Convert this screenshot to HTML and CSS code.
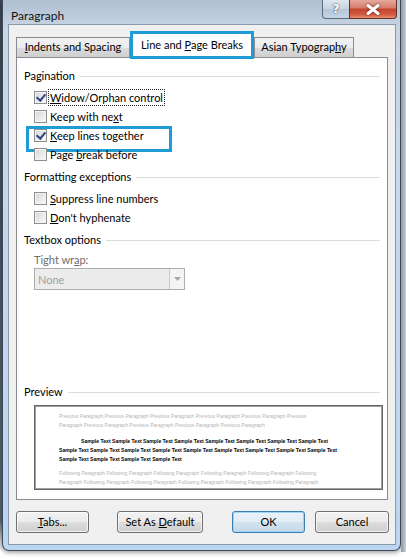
FILE: index.html
```html
<!DOCTYPE html>
<html>
<head>
<meta charset="utf-8">
<link rel="stylesheet" href="styles.css">
</head>
<body>
<div class="screen">
  <div class="window">
    <div class="titlebar">
      <span class="title">Paragraph</span>
      <div class="caption-btns">
        <div class="cbtn help">?</div>
        <div class="cbtn close">
          <svg width="14" height="11" viewBox="0 0 14 11"><path d="M2 1.5 L12 9.5 M12 1.5 L2 9.5" stroke="#fff" stroke-width="3" stroke-linecap="round"/></svg>
        </div>
      </div>
    </div>
    <div class="client">
      <div class="tabs">
        <div class="tab t1"><span><u>I</u>ndents and Spacing</span></div>
        <div class="tab active"><span>Line and <u>P</u>age Breaks</span></div>
        <div class="tab t3"><span>Asian Typograp<u>h</u>y</span></div>
      </div>
      <div class="panel">
        <div class="group">Pagination</div>
        <div class="rows first">
          <div class="row"><span class="cb checked"></span><span class="lbl focus"><u>W</u>idow/Orphan control</span></div>
          <div class="row"><span class="cb"></span><span class="lbl">Keep with ne<u>x</u>t</span></div>
          <div class="row hl"><span class="cb checked"></span><span class="lbl"><u>K</u>eep lines together</span></div>
          <div class="row"><span class="cb"></span><span class="lbl">Page <u>b</u>reak before</span></div>
        </div>
        <div class="group">Formatting exceptions</div>
        <div class="rows first">
          <div class="row"><span class="cb"></span><span class="lbl"><u>S</u>uppress line numbers</span></div>
          <div class="row"><span class="cb"></span><span class="lbl"><u>D</u>on't hyphenate</span></div>
        </div>
        <div class="group">Textbox options</div>
        <div class="sublabel">Tight wr<u>a</u>p:</div>
        <div class="combo">
          <span class="combo-text">None</span>
          <span class="combo-btn"><svg width="7" height="4" viewBox="0 0 7 4"><path d="M0 0 H7 L3.5 4 Z" fill="#a8a8a8"/></svg></span>
        </div>
        <div class="group preview-h">Preview</div>
        <div class="preview">
          <div class="pl gray">Previous Paragraph Previous Paragraph Previous Paragraph Previous Paragraph Previous Paragraph Previous</div>
          <div class="pl gray">Paragraph Previous Paragraph Previous Paragraph Previous Paragraph Previous Paragraph</div>
          <div class="pl sample indent">Sample Text Sample Text Sample Text Sample Text Sample Text Sample Text Sample Text Sample Text</div>
          <div class="pl sample">Sample Text Sample Text Sample Text Sample Text Sample Text Sample Text Sample Text Sample Text Sample Text</div>
          <div class="pl sample">Sample Text Sample Text Sample Text Sample Text</div>
          <div class="pl gray follow">Following Paragraph Following Paragraph Following Paragraph Following Paragraph Following Paragraph Following</div>
          <div class="pl gray">Paragraph Following Paragraph Following Paragraph Following Paragraph Following Paragraph Following Paragraph</div>
          <div class="pl gray">Following Paragraph Following Paragraph Following Paragraph Following Paragraph Following Paragraph Following</div>
        </div>
      </div>
      <div class="buttons">
        <div class="btn tabs-btn"><span><u>T</u>abs...</span></div>
        <div class="btn default-btn"><span>Set As <u>D</u>efault</span></div>
        <div class="btn ok"><span>OK</span></div>
        <div class="btn cancel"><span>Cancel</span></div>
      </div>
    </div>
  </div>
</div>
</body>
</html>
```
FILE: styles.css
```css
* { box-sizing: border-box; }
html, body { margin: 0; padding: 0; }
body {
  width: 406px;
  height: 559px;
  overflow: hidden;
  background: #ffffff;
  font-family: "Lato", "Liberation Sans", sans-serif;
  font-size: 11px;
  color: #000;
}
.screen {
  width: 406px;
  height: 559px;
  background: linear-gradient(to bottom, #3b4654 0, #596473 520px, #ffffff 552px);
  padding-left: 2px;
  position: relative;
}
.screen::after {
  content: "";
  position: absolute;
  right: 0; top: 0;
  width: 5px; height: 552px;
  background: linear-gradient(to right, #8e9aa6, #c8cfd6);
}
.window {
  width: 399px;
  height: 551px;
  border: 1px solid #3e4a57;
  border-top: none;
  border-radius: 0 0 7px 7px;
  background: linear-gradient(to bottom, #aebfd0 0, #c9d6e4 30px, #c4d8ee 200px, #bcd5f0 100%);
  padding: 0 4px 5px 5px;
  display: flex;
  flex-direction: column;
  box-shadow: 0 2px 4px rgba(0,0,0,0.35);
}
.titlebar {
  height: 30px;
  display: flex;
  justify-content: space-between;
  align-items: flex-start;
}
.title {
  margin-top: 7px;
  margin-left: 3px;
  font-size: 12px;
  line-height: 17px;
  color: #111;
}
.caption-btns {
  display: flex;
  margin-right: -1px;
}
.cbtn {
  height: 19px;
  border: 1px solid #5b6b7e;
  border-top: none;
  display: flex;
  align-items: center;
  justify-content: center;
}
.help {
  width: 27px;
  border-radius: 0 0 0 4px;
  background: linear-gradient(to bottom, #dfe6ee 0, #c7d3df 50%, #b6c5d5 51%, #c7d6e6 100%);
  color: #fff;
  font-family: "DejaVu Sans", sans-serif;
  font-weight: bold;
  font-size: 12px;
  text-shadow: 0 0 2px #4a5a70, 0 0 1px #4a5a70;
  border-right: none;
}
.close {
  width: 48px;
  border-radius: 0 0 4px 0;
  background: linear-gradient(to bottom, #e6a89c 0, #d67b6b 45%, #c2432e 50%, #d35a42 80%, #e6906f 100%);
  border-color: #6a3028;
}
.close svg { filter: drop-shadow(0 0 1px #5a1a10); }
.client {
  flex: 1;
  background: #f0f0f0;
  border: 1px solid #8b9aab;
  padding: 6px 7px 0 7px;
  display: flex;
  flex-direction: column;
}
.tabs {
  display: flex;
  align-items: flex-end;
  height: 26px;
  position: relative;
  z-index: 2;
}
.tab {
  flex: none;
  height: 20px;
  line-height: 18px;
  border: 1px solid #898c95;
  border-bottom: none;
  background: linear-gradient(to bottom, #f2f2f2 0, #ebebeb 50%, #dddddd 51%, #cfcfcf 100%);
  color: #000;
  white-space: nowrap;
  text-align: center;
  overflow: hidden;
}
.t1 { width: 114px; }
.tab.active {
  width: 124px;
  height: 28px;
  line-height: 21px;
  background: #fff;
  margin: 0 0 -2px 0;
  border: 3px solid #1f9bd6;
}
.t3 { width: 100px; }
.panel {
  height: 443px;
  background: #fff;
  border: 1px solid #898c95;
  padding: 10px 7px 0 7px;
  position: relative;
  z-index: 1;
}
.group {
  height: 16px;
  line-height: 16px;
  display: flex;
  align-items: center;
  gap: 5px;
  color: #000;
  white-space: nowrap;
}
.group::after {
  content: "";
  flex: 1;
  height: 1px;
  background: #dcdcdc;
}
.rows { display: flex; flex-direction: column; margin-bottom: 5px; }
.rows.first { margin-top: 4px; }
.row {
  height: 19px;
  display: flex;
  align-items: center;
  padding-left: 10px;
  position: relative;
}
.row.hl::before {
  content: "";
  position: absolute;
  left: 2px; top: 0;
  width: 140px; height: 20px;
  border: 3px solid #1f9bd6;
}
.cb {
  width: 13px;
  height: 13px;
  border: 1px solid #8e8f8f;
  background: linear-gradient(135deg, #d6d6d6 0, #ececec 60%, #fafafa 100%);
  box-shadow: inset 0 0 0 1px #f4f4f4;
  margin-right: 2px;
  position: relative;
  flex: none;
}
.cb.checked::after {
  content: "";
  position: absolute;
  left: 3px; top: 0px;
  width: 4px; height: 7px;
  border: solid #2f4684;
  border-width: 0 2px 2px 0;
  transform: rotate(40deg);
}
.lbl { padding: 0 1px; line-height: 15px; white-space: nowrap; }
.lbl.focus { outline: 1px dotted #222; outline-offset: 0; }
.sublabel {
  margin-top: 4px;
  margin-left: 10px;
  height: 16px;
  line-height: 16px;
  color: #6d6d6d;
}
.combo {
  margin-left: 10px;
  width: 151px;
  height: 22px;
  border: 1px solid #adadad;
  background: #ececec;
  display: flex;
  align-items: center;
  justify-content: space-between;
}
.combo-text { padding-left: 3px; color: #a0a0a0; }
.combo-btn {
  width: 15px;
  height: 20px;
  border-left: 1px solid #c8c8c8;
  background: #f4f4f4;
  display: flex;
  align-items: center;
  justify-content: center;
}
.preview-h { margin-top: 94px; }
.preview {
  margin: 5px 0 0 10px;
  width: 349px;
  height: 85px;
  border: 1px solid #646464;
  box-shadow: inset 0 0 0 1px #a0a0a0;
  background: #fff;
  overflow: hidden;
  padding: 6px 0 0 24px;
  font-family: "Liberation Sans", Arial, sans-serif;
  font-size: 5px;
}
.pl {
  height: 9px;
  line-height: 9px;
  white-space: nowrap;
}
.gray { color: #b4b4b4; }
.sample { color: #000; font-weight: bold; font-size: 5.1px; }
.sample.indent { margin-top: 7px; padding-left: 22px; }
.follow { margin-top: 5px; }
.buttons {
  display: flex;
  align-items: flex-start;
  height: 44px;
  padding-top: 11px;
}
.btn {
  flex: none;
  height: 22px;
  border: 1px solid #707070;
  border-radius: 3px;
  background: linear-gradient(to bottom, #f2f2f2 0, #ebebeb 50%, #dddddd 51%, #cfcfcf 100%);
  box-shadow: inset 0 0 0 1px rgba(255,255,255,0.7);
  display: flex;
  align-items: center;
  justify-content: center;
  line-height: 16px;
  white-space: nowrap;
}
.tabs-btn { width: 73px; }
.default-btn { width: 86px; margin-left: 28px; }
.ok {
  width: 73px;
  margin-left: 29px;
  border-color: #3c7fb1;
  background: linear-gradient(to bottom, #eaf3fa 0, #e2ecf5 50%, #d3e2ef 51%, #c6d8e8 100%);
  box-shadow: inset 0 0 0 1px #9fd5f5;
}
.cancel { width: 74px; margin-left: 10px; }
```
